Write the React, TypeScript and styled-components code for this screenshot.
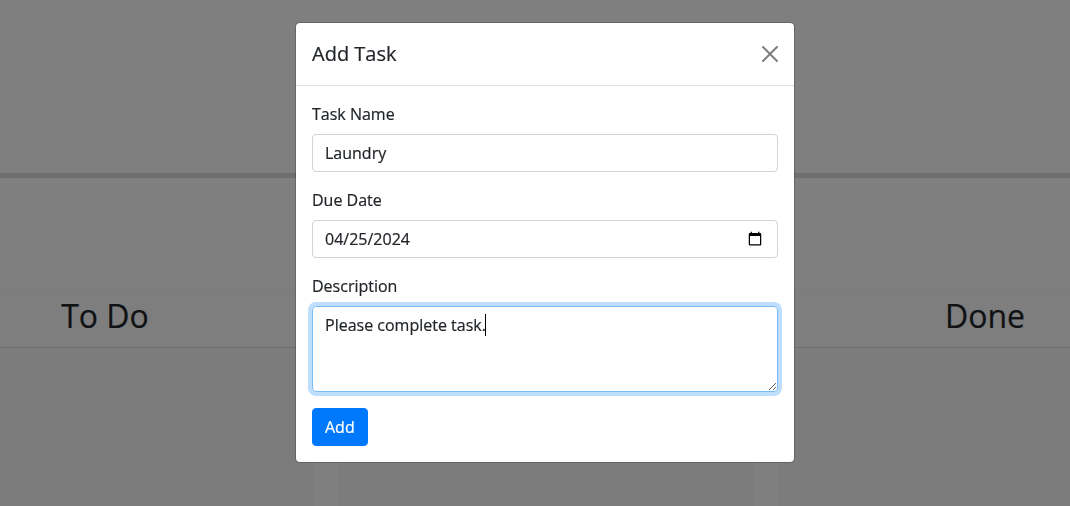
import React from "react";
import styled, { createGlobalStyle } from "styled-components";

const GlobalStyle = createGlobalStyle`
  *, *::before, *::after { box-sizing: border-box; }
  html, body { margin: 0; height: 100%; overflow: hidden; }
  body {
    background: #fff;
    color: #212529;
    font-family: "Open Sans", "Noto Sans", sans-serif;
    font-size: 16px;
    line-height: 1.5;
    -webkit-text-stroke: 0.2px;
  }
`;

const Page = styled.main`
  height: 506px;
  width: 100%;
  overflow: hidden;
  display: flex;
  flex-direction: column;
`;

const Banner = styled.header`
  flex: none;
  height: 178px;
  border-bottom: 5px solid #dae1e7;
`;

const Board = styled.section`
  flex: 1;
  margin-top: 110px;
  display: flex;
  justify-content: center;
  gap: 24px;
  /* the centre lane sits slightly right of the window's middle */
  padding-left: 20px;
`;

const Lane = styled.article`
  flex: none;
  width: 416px;
  background: #f8f8f8;
  border-top: 1px solid #f9f9f9;
`;

const LaneTitle = styled.h2`
  margin: 0;
  height: 59px;
  padding-top: 8px;
  background: #fdfdfd;
  border-bottom: 1px solid #dedede;
  text-align: center;
  font-size: 32px;
  font-weight: 400;
  line-height: 38.4px;
`;

const Backdrop = styled.div`
  position: fixed;
  inset: 0;
  padding: 22px 0 0 20px;
  background: rgba(0, 0, 0, 0.5);
  display: flex;
  justify-content: center;
  align-items: flex-start;
`;

const Dialog = styled.div`
  width: 500px;
  background: #fff;
  background-clip: padding-box;
  border: 1px solid rgba(0, 0, 0, 0.2);
  border-radius: 5px;
`;

const DialogHeader = styled.div`
  display: flex;
  align-items: center;
  justify-content: space-between;
  padding: 16px;
  border-bottom: 1px solid #dee2e6;
`;

const DialogTitle = styled.h5`
  margin: 0;
  font-size: 20px;
  font-weight: 400;
  line-height: 30px;
`;

const CloseButton = styled.button`
  display: flex;
  padding: 0;
  border: 0;
  background: none;
  opacity: 0.5;
  svg { width: 16px; height: 16px; display: block; }
`;

const Form = styled.form`
  padding: 16px;
`;

const Field = styled.div`
  display: flex;
  flex-direction: column;
  margin-bottom: 16px;
`;

const Label = styled.label`
  margin-bottom: 8px;
`;

const Input = styled.input`
  height: 38px;
  padding: 6px 12px;
  border: 1px solid #ced4da;
  border-radius: 4px;
  background: #fff;
  color: #212529;
  font: inherit;
  outline: 0;
  &::-webkit-datetime-edit { padding: 0; }
  &::-webkit-datetime-edit-fields-wrapper,
  &::-webkit-datetime-edit-text,
  &::-webkit-datetime-edit-month-field,
  &::-webkit-datetime-edit-day-field,
  &::-webkit-datetime-edit-year-field { padding: 0; }
`;

const TextArea = styled.div`
  height: 86px;
  padding: 6px 12px;
  border: 1px solid #7ab9fa;
  border-radius: 4px;
  box-shadow: 0 0 0 4px #bfddfd;
  overflow: auto;
  resize: vertical;
`;

const Caret = styled.span`
  display: inline-block;
  width: 1px;
  height: 22px;
  margin: -4px 0 -4px -1px;
  vertical-align: -1px;
  background: #000;
`;

const SubmitButton = styled.button`
  display: block;
  height: 38px;
  padding: 6px 12px;
  border: 1px solid #0078fb;
  border-radius: 4px;
  background: #0078fb;
  color: #fff;
  font: inherit;
`;

export default function App() {
  return (
    <>
      <GlobalStyle />
      <Page>
        <Banner />
        <Board>
          <Lane><LaneTitle>To Do</LaneTitle></Lane>
          <Lane><LaneTitle /></Lane>
          <Lane><LaneTitle>Done</LaneTitle></Lane>
        </Board>
      </Page>
      <Backdrop>
        <Dialog role="dialog" aria-label="Add Task">
          <DialogHeader>
            <DialogTitle>Add Task</DialogTitle>
            <CloseButton type="button" aria-label="Close">
              <svg viewBox="0 0 16 16" fill="#000">
                <path d="M.293.293a1 1 0 0 1 1.414 0L8 6.586 14.293.293a1 1 0 1 1 1.414 1.414L9.414 8l6.293 6.293a1 1 0 0 1-1.414 1.414L8 9.414l-6.293 6.293a1 1 0 0 1-1.414-1.414L6.586 8 .293 1.707a1 1 0 0 1 0-1.414z" />
              </svg>
            </CloseButton>
          </DialogHeader>
          <Form>
            <Field>
              <Label htmlFor="name">Task Name</Label>
              <Input id="name" type="text" defaultValue="Laundry" />
            </Field>
            <Field>
              <Label htmlFor="due">Due Date</Label>
              <Input id="due" type="date" defaultValue="2024-04-25" />
            </Field>
            <Field>
              <Label as="span">Description</Label>
              <TextArea role="textbox" aria-multiline="true">
                Please complete task.<Caret />
              </TextArea>
            </Field>
            <SubmitButton type="button">Add</SubmitButton>
          </Form>
        </Dialog>
      </Backdrop>
    </>
  );
}
